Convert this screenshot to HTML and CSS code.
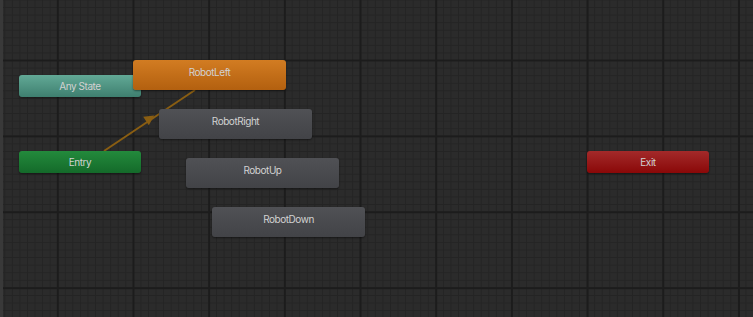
FILE: index.html
```html
<!DOCTYPE html>
<html lang="en">

<head>
    <meta charset="UTF-8">
    <meta name="viewport" content="width=device-width, initial-scale=1.0">
    <title>Animator</title>
    <link rel="stylesheet" href="styles.css">
</head>

<body>
    <div class="window">
        <div class="edge"></div>
        <div class="graph">
            <svg class="links" width="750" height="317">
                <line x1="101" y1="151" x2="192" y2="90" stroke="#8a5e12" stroke-width="2" />
                <polygon points="0,-5 10,0 0,5" fill="#8a5e12" transform="translate(143,121) rotate(-33.8)" />
            </svg>
            <div class="node any" style="left: 16px; top: 75px;">Any State</div>
            <div class="node entry" style="left: 16px; top: 151px;">Entry</div>
            <div class="node exit" style="left: 584px; top: 151px;">Exit</div>
            <div class="node state default" style="left: 130px; top: 60px;">RobotLeft</div>
            <div class="node state" style="left: 156px; top: 109px;">RobotRight</div>
            <div class="node state" style="left: 183px; top: 158px;">RobotUp</div>
            <div class="node state" style="left: 209px; top: 207px;">RobotDown</div>
        </div>
    </div>
</body>

</html>
```

FILE: styles.css
```css
body {
    margin: 0;
    padding: 0;
    background-color: #2b2b2b;
    font-family: Inter, "Noto Sans", sans-serif;
    overflow: hidden;
}

.window {
    display: flex;
    width: 753px;
    height: 317px;
}

.edge {
    width: 3px;
    background-color: #393939;
}

.graph {
    position: relative;
    flex: 1;
    background-color: #2b2b2b;
    background-image:
        linear-gradient(90deg, #1c1c1c 2px, transparent 2px),
        linear-gradient(180deg, #1c1c1c 2px, transparent 2px),
        linear-gradient(90deg, #242424 1px, transparent 1px),
        linear-gradient(180deg, #242424 1px, transparent 1px);
    background-size: 75.7px 75.9px, 75.7px 75.9px, 7.57px 7.59px, 7.57px 7.59px;
    background-position: 53.8px 59.5px, 53.8px 59.5px, 1.3px 7px, 1.3px 7px;
}

.links {
    position: absolute;
    left: 0;
    top: 0;
}

.node {
    position: absolute;
    box-sizing: border-box;
    width: 122px;
    height: 22px;
    border-radius: 3px;
    color: #d2d2d2;
    font-size: 10px;
    letter-spacing: -0.45px;
    line-height: 22px;
    text-align: center;
    box-shadow: 0 1px 2px rgba(0, 0, 0, 0.45);
}

.any {
    background: linear-gradient(#62a996, #3e7f6f);
}

.entry {
    background: linear-gradient(#238a3c, #146a2a);
}

.exit {
    background: linear-gradient(#a32a2a, #8a0808);
}

.state {
    width: 153px;
    height: 30px;
    line-height: 24px;
    background: linear-gradient(#505155, #424347);
}

.default {
    background: linear-gradient(#d27c22, #b3600f);
}
```
